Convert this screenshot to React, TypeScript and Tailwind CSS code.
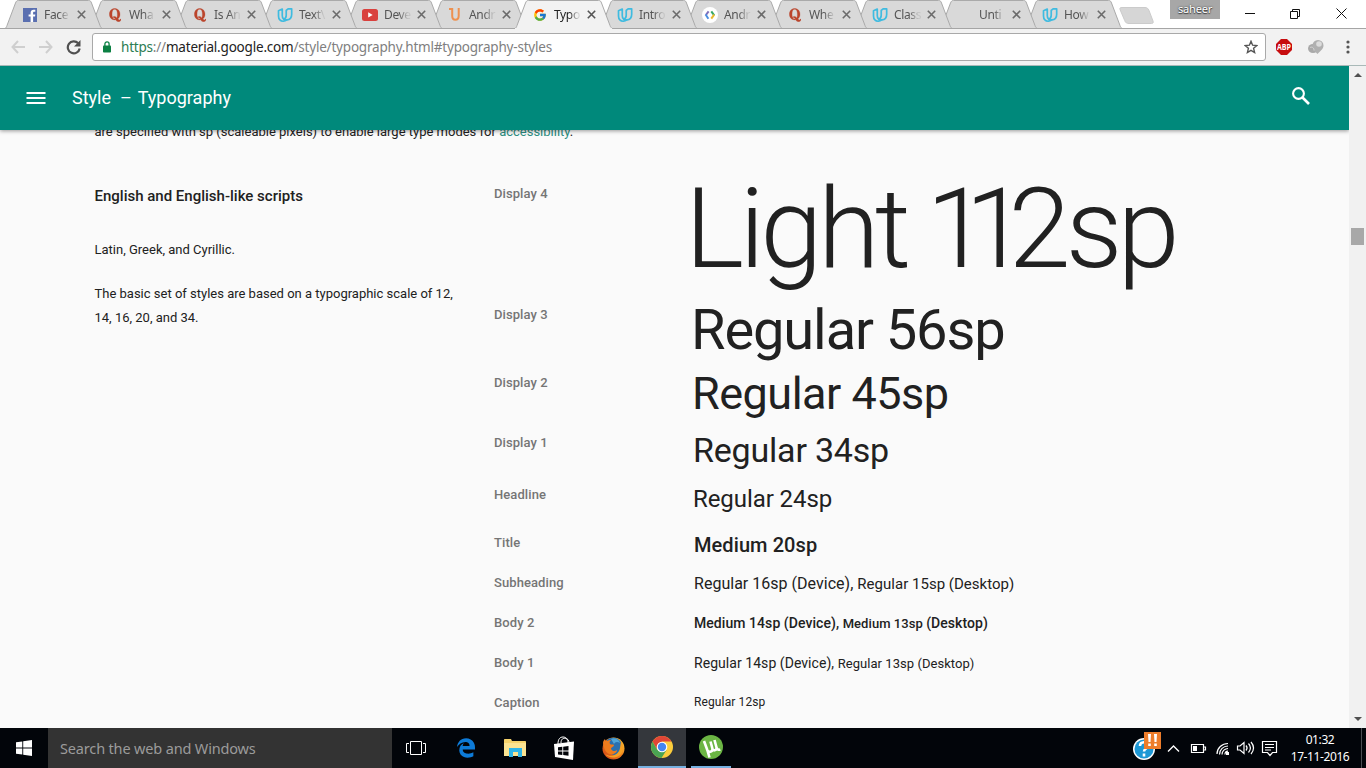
import React from "react";
import { FcGoogle } from "react-icons/fc";
import { FaEdgeLegacy } from "react-icons/fa6";

const Facebook = () => (
  <svg width="14" height="14" viewBox="0 0 14 14">
    <rect width="14" height="14" fill="#5a6fb0" />
    <path d="M7.600 14V8.600H5.600V6.400h2V4.700C7.600 2.700 8.800 1.700 10.600 1.700h1.700v2.100h-1.100c-.9 0-1.100.4-1.100 1.100v1.500h2.200L12 8.600h-1.900V14z" fill="#fff" />
  </svg>
);
const Quora = () => (
  <svg width="12" height="14" viewBox="0 0 12 14">
    <path fillRule="evenodd" d="M5.700.5C8.900.5 11 2.900 11 6.200c0 2-.7 3.600-2 4.600.5.900 1 1.300 1.500 1.200.5 0 .7-.4.800-.9h.7c0 1.600-.8 2.600-2.400 2.600-1.400 0-2.200-.7-2.900-1.900-.3.100-.7.100-1 .100C2.500 11.900.4 9.500.4 6.200S2.500.5 5.700.5zM5.700 1.300C3.900 1.300 3 2.900 3 6.200c0 3.200.9 4.900 2.700 4.900l.6-.1C5.700 10 5.100 9.500 4.200 9.500l-.5.1-.3-.6c.5-.4 1.100-.6 1.800-.6 1.300 0 2 .6 2.600 1.500.4-.8.600-2 .6-3.700 0-3.300-.9-4.900-2.700-4.900z" fill="#bb452c" stroke="#bb452c" strokeWidth=".3" />
  </svg>
);
const Udacity = () => (
  <svg width="17" height="16" viewBox="0 0 17 16" fill="none" stroke="#3fbbe0" strokeWidth="1.800" strokeLinejoin="round" strokeLinecap="round">
    <path d="M5.600 1.600 1.600 3.400V9c0 3.600 2.200 5.800 5.200 5.600 1.500-.1 2.600-.6 3.600-1.400-3 .2-4.800-1.400-4.800-4.600z" />
    <path d="M7.300 12.300c1.900-.6 2.500-2 2.500-4V3.200l2-1.800h3.800v5.800c0 3.800-2.400 5.900-5.200 6" />
  </svg>
);
const Youtube = () => (
  <svg width="16" height="12" viewBox="0 0 16 12">
    <rect width="16" height="12" rx="2.500" fill="#d9413e" />
    <path d="M6.200 3.300v5.200l4.500-2.600z" fill="#fff" />
  </svg>
);
const OrangeU = () => (
  <svg width="12" height="13" viewBox="0 0 12 13" fill="none" stroke="#ee9150" strokeWidth="2">
    <path d="M0 1h3.200v6.800c0 2.800 1 4 3.200 4 2.300 0 3.300-1.300 3.300-4V0" />
  </svg>
);
const AndroidDev = () => (
  <svg width="16" height="16" viewBox="0 0 16 16" fill="none" strokeWidth="2">
    <circle cx="8" cy="8" r="8" fill="#fff" />
    <path d="M6.600 4.300 3.900 8" stroke="#7e6fbb" />
    <path d="M3.600 7.500 6.400 11.700" stroke="#4a8ee0" />
    <path d="M9.300 4.300 12.200 8.300" stroke="#35a867" />
    <path d="M12.200 7.700 9.300 11.700" stroke="#e9b92c" />
  </svg>
);

const tabs: { t: string; icon: React.ReactNode; active?: boolean; z: string }[] = [
  { t: "Face", icon: <Facebook />, z: "z-[13]" },
  { t: "Wha", icon: <Quora />, z: "z-[12]" },
  { t: "Is An", icon: <Quora />, z: "z-[11]" },
  { t: "Text\\", icon: <Udacity />, z: "z-[10]" },
  { t: "Deve", icon: <Youtube />, z: "z-[9]" },
  { t: "Andr", icon: <OrangeU />, z: "z-[8]" },
  { t: "Typo", icon: <FcGoogle className="h-[14px] w-[14px]" />, active: true, z: "z-[20]" },
  { t: "Intro", icon: <Udacity />, z: "z-[6]" },
  { t: "Andr", icon: <AndroidDev />, z: "z-[5]" },
  { t: "Whe", icon: <Quora />, z: "z-[4]" },
  { t: "Class", icon: <Udacity />, z: "z-[3]" },
  { t: "Unti", icon: null, z: "z-[2]" },
  { t: "How", icon: <Udacity />, z: "z-[1]" },
];

function Tab({ t, icon, active, z }: (typeof tabs)[number]) {
  return (
    <div className={`relative -mr-[14px] h-[29px] w-[99px] shrink-0 ${z}`}>
      <svg className="absolute inset-0" width="99" height="29" viewBox="0 0 99 29">
        <path
          d="M1 28.500 C2 28 2.500 27 3 25.500 L11.500 3 C12.500 .8 13 .5 14.500 .5 H84.500 C86.500 .5 87 1.500 87.500 3 L96 25.500 C96.500 27 97 28 98.500 28.500"
          fill={active ? "#f2f2f2" : "#d9d9d9"}
          stroke="#aaaaaa"
        />
        {active ? <path d="M1 28.500H98" stroke="#f2f2f2" /> : <path d="M0 28.500H99" stroke="#a5a5a5" />}
      </svg>
      <div className="relative flex h-[29px] items-center pl-[18px]">
        <span className="flex w-4 shrink-0 items-center justify-center">{icon}</span>
        <span className={`ml-[6px] w-[27px] whitespace-nowrap text-[12px] leading-[29px] tracking-[-0.35px] [mask-image:linear-gradient(to_right,#000_55%,rgba(0,0,0,0.15)_90%)] ${active ? "text-[#222]" : "text-[#555]"}`}>{t}</span>
        <svg className="ml-[6px] shrink-0" width="9" height="9" viewBox="0 0 9 9" stroke={active ? "#555" : "#6b6b6b"} strokeWidth="1.600">
          <path d="M.8 .8 8.200 8.200M8.200 .8 .8 8.200" />
        </svg>
      </div>
    </div>
  );
}

function Browser() {
  return (
    <header className="h-[66px] shrink-0 font-['Noto_Sans',sans-serif]">
      <div className="relative flex h-[28px] bg-white pl-[4px]">
        {tabs.map((tab, i) => <Tab key={i} {...tab} />)}
        <svg className="ml-[10px] mt-[7px] shrink-0" width="35" height="17" viewBox="0 0 35 17">
          <path d="M3 .5H26c2 0 3 .8 4 3l4 10.500c.6 1.800 0 2.500-1.500 2.500H10c-2.500 0-3.500-.8-4.300-3L1 2.500C.5 1 1.200.5 3 .5z" fill="#d6d6d6" stroke="#cbcbcb" />
        </svg>
        <div className="ml-[16px] h-[19px] w-[50px] bg-[#a7a7a7] text-center text-[11px] leading-[17px] tracking-[-0.2px] text-white [text-shadow:0_0_2px_#333,0_1px_1px_#444]">saheer</div>
        <svg className="ml-[25px] mt-[7px]" width="102" height="13" viewBox="0 0 102 13" fill="none" stroke="#111" strokeWidth="1">
          <path d="M0 6.500h10M45.500 4.500h7v7h-7zM47.500 4V2.500h7v7H53M91.500 1.500l10 10M101.500 1.500l-10 10" />
        </svg>
      </div>
      <div className="flex h-[38px] items-center border-t border-b border-t-[#a5a5a5] border-b-[#a9b9b8] bg-[#f2f2f2] pl-[11px]">
        <svg width="72" height="16" viewBox="0 0 72 16" fill="none" stroke="#cfcfcf" strokeWidth="2">
          <path d="M14 8H2M7 2 1.500 8 7 14M28 8h12M35 2l5.500 6L35 14" />
          <path d="M67.200 4.200A6 6 0 1 0 68.700 9.500" stroke="#505050" strokeWidth="2.200" />
          <path d="M69.500 1v6.500H63z" fill="#505050" stroke="none" />
        </svg>
        <div className="ml-[9px] flex h-[28px] w-[1174px] items-center rounded-[3px] border border-[#a9a9a9] bg-white pl-[10px]">
          <svg width="8" height="12" viewBox="0 0 8 12">
            <path d="M1.900 5V3a2.100 2.100 0 0 1 4.200 0v2" fill="none" stroke="#0b8043" strokeWidth="1.300" />
            <rect y="4.500" width="8" height="7" rx=".8" fill="#0b8043" />
          </svg>
          <span className="ml-[10px] w-[500px] whitespace-nowrap text-[13.500px] leading-[26px] tracking-[-0.2px] text-[#808080]">
            <span className="text-[#2c7d52]">https</span>://<span className="text-[#222]">material.google.com</span>/style/typography.html#typography-styles
          </span>
          <svg className="ml-auto mr-[7px]" width="14" height="14" viewBox="0 0 14 14" fill="none" stroke="#555" strokeWidth="1.400">
            <path d="M7 1.300 8.600 5.200l4.300.3-3.300 2.800 1 4.200L7 10.300l-3.600 2.200 1-4.200L1.100 5.500l4.300-.3z" />
          </svg>
        </div>
        <svg className="ml-[10px]" width="16" height="16" viewBox="0 0 16 16">
          <path d="M5 0h6l5 5v6l-5 5H5l-5-5V5z" fill="#c70d0f" />
          <text x="8" y="11" fontSize="8.500" fontWeight="bold" fill="#fff" textAnchor="middle" fontFamily="Open Sans" textLength="14" lengthAdjust="spacingAndGlyphs">ABP</text>
        </svg>
        <svg className="ml-[16px]" width="16" height="16" viewBox="0 0 16 16">
          <ellipse cx="5" cy="9.500" rx="5" ry="4.500" fill="#a9a9a9" />
          <path d="M10 1a5.500 5.500 0 0 1 5.500 5.500C15.500 10 12 12 9.500 15 6 12 4.500 9.500 4.500 6.500A5.500 5.500 0 0 1 10 1z" fill="#b0b0b0" />
          <circle cx="11" cy="5" r="2.800" fill="#dcdcdc" />
          <path d="M2 8.500c2-1 4 0 4 3" stroke="#d8d8d8" fill="none" />
        </svg>
        <svg className="ml-[22px]" width="4" height="14" viewBox="0 0 4 14" fill="#555">
          <circle cx="2" cy="2" r="1.600" /><circle cx="2" cy="7" r="1.600" /><circle cx="2" cy="12" r="1.600" />
        </svg>
      </div>
    </header>
  );
}

const rows = [
  { l: "Display 4", h: "h-[121px]", s: <span className="-mt-[8px] -ml-[10px] text-[112px] font-light leading-[112px] tracking-[-4.5px]">Light<span className="tracking-[-7.5px]"> </span><span className="tracking-[-23.500px]">1</span><span className="tracking-[-18.500px]">1</span><span className="tracking-[-5px]">2sp</span></span> },
  { l: "Display 3", h: "h-[68px]", s: <span className="-ml-[4px] text-[56px] leading-[56px] tracking-[-1.1px]">Regular 56sp</span> },
  { l: "Display 2", h: "h-[60px]", s: <span className="mt-px -ml-[3px] text-[45px] leading-[45px] tracking-[-0.5px]">Regular 45sp</span> },
  { l: "Display 1", h: "h-[52px]", s: <span className="mt-[3px] -ml-[2px] text-[34px] leading-[34px] tracking-[-0.2px]">Regular 34sp</span> },
  { l: "Headline", h: "h-[48px]", s: <span className="mt-[5px] -ml-[2px] text-[24px] leading-[24px] tracking-[-0.08px]">Regular 24sp</span> },
  { l: "Title", h: "h-[40px]", s: <span className="mt-[5px] -ml-px text-[20px] font-medium leading-[20px] tracking-[0.08px]">Medium 20sp</span> },
  { l: "Subheading", h: "h-[40px]", s: <span className="mt-[2px] -ml-px text-[16px] leading-[24px] tracking-[0.02px]">Regular 16sp (Device), <span className="text-[15px]">Regular 15sp (Desktop)</span></span> },
  { l: "Body 2", h: "h-[40px]", s: <span className="mt-px -ml-px text-[14px] font-medium leading-[24px] tracking-[0.06px]">Medium 14sp (Device), <span className="text-[13px]">Medium 13sp </span>(Desktop)</span> },
  { l: "Body 1", h: "h-[40px]", s: <span className="mt-px -ml-px text-[14px] leading-[24px] tracking-[0.05px]">Regular 14sp (Device), <span className="text-[13px]">Regular 13sp (Desktop)</span></span> },
  { l: "Caption", h: "h-[38px]", s: <span className="-ml-px text-[12px] leading-[24px] tracking-[0.12px]">Regular 12sp</span> },
];

function Page() {
  return (
    <div className="flex min-h-0 flex-1 font-[Roboto,sans-serif]">
      <div className="flex w-[1349px] flex-col overflow-hidden bg-[#fafafa] text-[#212121]">
        <div className="relative z-10 flex h-[64px] shrink-0 items-center bg-[#00897b] pl-[26px] pr-[39px] text-white shadow-[0_1px_4px_rgba(0,0,0,0.4)]">
          <svg width="20" height="12" viewBox="0 0 20 12" fill="#fff"><path d="M.5 0h19v2h-19zM.5 5h19v2h-19zM.5 10h19v2h-19z" /></svg>
          <span className="-mt-[2px] ml-[26px] whitespace-pre text-[18px]">Style  – <span className="ml-[1.500px]">Typography</span></span>
          <svg className="ml-auto -mt-[4px]" width="18" height="18" viewBox="0 0 18 18" fill="none" stroke="#fff">
            <circle cx="6.500" cy="6.500" r="5.400" strokeWidth="2.100" />
            <path d="M10.500 10.500 17 17" strokeWidth="2.600" />
          </svg>
        </div>
        <p className="-mt-[10px] pl-[94.500px] text-[13px] leading-[24px]">are specified with sp (scaleable pixels) to enable large type modes for <span className="text-[#2b8d80]">accessibility</span>.</p>
        <div className="mt-[37px] flex">
          <section className="w-[494px] pl-[94.500px] pt-[3px] text-[13px]">
            <h2 className="text-[15px] font-medium leading-[24px]">English and English-like scripts</h2>
            <p className="mt-[30px] leading-[24px]">Latin, Greek, and Cyrillic.</p>
            <p className="mt-[20px] w-[370px] leading-[24px]">The basic set of styles are based on a typographic scale of 12,<br />14, 16, 20, and 34.</p>
          </section>
          <section>
            {rows.map((r) => (
              <div key={r.l} className={`flex items-start ${r.h}`}>
                <span className="mt-px w-[201px] text-[13px] font-medium leading-[24px] tracking-[0.08px] text-[#757575]">{r.l}</span>
                <span className="flex whitespace-pre"><span className="contents">{r.s}</span></span>
              </div>
            ))}
          </section>
        </div>
      </div>
      <div className="flex w-[17px] flex-col items-center bg-[#f1f1f1]">
        <svg className="mt-[7px]" width="8" height="4" viewBox="0 0 8 4"><path d="M0 4 4 0l4 4z" fill="#505050" /></svg>
        <div className="mt-[151px] h-[17px] w-[13px] bg-[#a8a8a8]" />
        <svg className="mb-[7px] mt-auto" width="8" height="4" viewBox="0 0 8 4"><path d="M0 0h8L4 4z" fill="#505050" /></svg>
      </div>
    </div>
  );
}

function Taskbar() {
  return (
    <footer className="flex h-[40px] shrink-0 items-center bg-[#02050a] font-['Noto_Sans',sans-serif]">
      <div className="flex w-[48px] justify-center">
        <svg width="16" height="16" viewBox="0 0 16 16" fill="#fff"><path d="M0 2.300 6.300 1.400V7.500H0zM7.200 1.300 16 0v7.500H7.200zM0 8.400h6.300v6.200L0 13.700zM7.200 8.400H16V16l-8.800-1.300z" /></svg>
      </div>
      <div className="h-[40px] w-[344px] bg-[#333] pl-[12px] text-[14.500px] leading-[41px] tracking-[-0.16px] text-[#9b9b9b]">Search the web and Windows</div>
      <svg className="ml-[14px]" width="20" height="16" viewBox="0 0 20 16" fill="none" stroke="#fff"><path d="M4.500 1.500h11v13h-11zM3 3.500H.5v9H3M17 3.500h2.500v9H17" /></svg>
      <FaEdgeLegacy className="ml-[30px] h-[22px] w-[20px] text-[#0d7bd8]" />
      <svg className="ml-[28px]" width="22" height="20" viewBox="0 0 22 20">
        <path d="M0 2c0-.6.400-1 1-1h6l1 2h13c.6 0 1 .4 1 1v14H0z" fill="#f5d26b" />
        <path d="M0 5h22v13H0z" fill="#fbe391" />
        <path d="M5 10h13v9h-4v-5H9v5H5z" fill="#2fb5e8" />
      </svg>
      <svg className="ml-[27px]" width="22" height="24" viewBox="0 0 22 24">
        <path d="M5 8C5 3 7 1 10 1s5 2 5 6M8 7c0-4 2-5 4.500-4.500C15 3 16 4 16 7" fill="none" stroke="#fff" />
        <path d="M1 8 21 5.500 20 24 2 21z" fill="#fff" />
        <path d="M5 11.300 9.300 10.800v3.700H5zM10.200 10.700 15.500 10v4.500h-5.300zM5 15.400h4.300V19L5 18.500zM10.200 15.400h5.300v4.400l-5.300-.7z" fill="#02050a" />
      </svg>
      <svg className="ml-[27px]" width="23" height="23" viewBox="0 0 23 23">
        <defs><linearGradient id="fox" x1="1" y1="0" x2="0" y2="1"><stop offset="0" stopColor="#ffd43c" /><stop offset=".5" stopColor="#ee7a1b" /><stop offset="1" stopColor="#c93c16" /></linearGradient></defs>
        <circle cx="11.500" cy="11.500" r="11" fill="url(#fox)" />
        <path d="M5 3C9-.5 16 0 19 5c2 4 1 9-2 12-4 2-8 1-9-2-2-1-4-3-4-6z" fill="#2b6fae" />
        <path d="M9 2c3-2 8 0 9 4-3-2-5-1-6 1z" fill="#50a5d8" />
        <path d="M1 6c0-2 1-3 2-4 0 1 1 2 2 2 1-1 3-1 4-1-1 1-2 2-1 4 1 1 3 0 4 1 0 2-3 2-3 4 1 2 4 3 6 1 0 3-4 5-7 4-3 0-6-4-7-11z" fill="#ee7b1d" />
        <path d="M19 4c3 4 3 10-1 14-5 4-12 3-15-1 6 4 14 1 15-6z" fill="#f6a125" />
      </svg>
      <div className="ml-[13px] flex h-[40px] w-[48px] items-center justify-center border-b-2 border-[#76b0e0] bg-[#34373c]">
        <svg width="22" height="22" viewBox="0 0 22 22">
          <circle cx="11" cy="11" r="11" fill="#fccd3c" />
          <path d="M11 5.500h9.500A11 11 0 0 0 1.500 5.500L6.200 13.700z" fill="#e04637" />
          <path d="M1.500 5.500A11 11 0 0 0 10.500 22l5.200-8.200L11 16 6.200 13.700z" fill="#4aa453" />
          <circle cx="11" cy="11" r="5.300" fill="#fff" /><circle cx="11" cy="11" r="4.200" fill="#4585f0" />
        </svg>
      </div>
      <div className="ml-[5px] flex h-[40px] w-[40px] items-center justify-center border-b-2 border-[#76b0e0]">
        <svg width="24" height="24" viewBox="0 0 24 24">
          <circle cx="12" cy="12" r="12" fill="#6bb544" />
          <path d="M5 6 8.300 15c1.200 3 5.200 2.200 5.200-1L11.500 6.500M13.500 14c1.200 2.500 4.500 1 4-1.500L15.500 5M17.300 12c.8 2.500 2 3.200 4 2.500M8.300 15 10.500 22.500" fill="none" stroke="#fff" strokeWidth="2.600" />
        </svg>
      </div>
      <svg className="ml-[401px] mb-[2px]" width="30" height="32" viewBox="0 0 30 32">
        <circle cx="12" cy="18" r="11" fill="#fff" /><circle cx="12" cy="18" r="9.500" fill="#1d98d5" />
        <path d="M8 15c0-5 8-5 8-.5 0 3-4 3-4 6M12 22.500v3" stroke="#fff" strokeWidth="2.600" fill="none" />
        <path d="M12 1h17v17H12z" fill="#ed7d2b" />
        <path d="M16 3h3l-.5 8h-2zM22 3h3l-.5 8h-2zM16.200 12.500h2.600V15h-2.600zM22.200 12.500h2.600V15h-2.600z" fill="#fff" />
      </svg>
      <svg className="ml-[5px]" width="112" height="20" viewBox="0 0 112 20" fill="none" stroke="#fff" strokeWidth="1.200">
        <path d="M1 13.500 6.500 8 12 13.500" strokeWidth="1.400" />
        <path d="M24.500 6.500h12v8h-12zM37 9h1.500v3H37" /><path d="M26 8h4v5h-4z" fill="#fff" stroke="none" />
        <path d="M50 16C50 10 55 5.500 61 5.500M52.500 16.500c0-5 4-8.500 8.500-8.500M55 16.500c0-3.500 3-6 6-6M58 16.500c0-2 1.500-3.300 3-3.300" />
        <rect x="59" y="14" width="3" height="3" fill="#fff" stroke="none" />
        <path d="M70.500 8h2.500L77 4.500v11L73 12h-2.500zM79 7.500c1.300 1.500 1.300 3.500 0 5M81.500 5.500c2.300 2.700 2.300 6.300 0 9M84 4c3.200 3.800 3.200 8.200 0 12" />
        <path d="M95.500 3.500h14v11h-4l-2.500 3-2.500-3h-5zM98 6.500h9M98 9.500h9M98 12h6" />
      </svg>
      <div className="-mt-px ml-[10px] w-[62px] whitespace-nowrap text-center text-[12px] leading-[17px] tracking-[-0.4px] text-white"><div>01:32</div><div>17-11-2016</div></div>
      <div className="ml-auto mr-[4px] h-[40px] w-px bg-[#4a4d52]" />
    </footer>
  );
}

export default function App() {
  return (
    <div className="flex h-[768px] w-[1366px] flex-col overflow-hidden">
      <Browser />
      <Page />
      <Taskbar />
    </div>
  );
}
